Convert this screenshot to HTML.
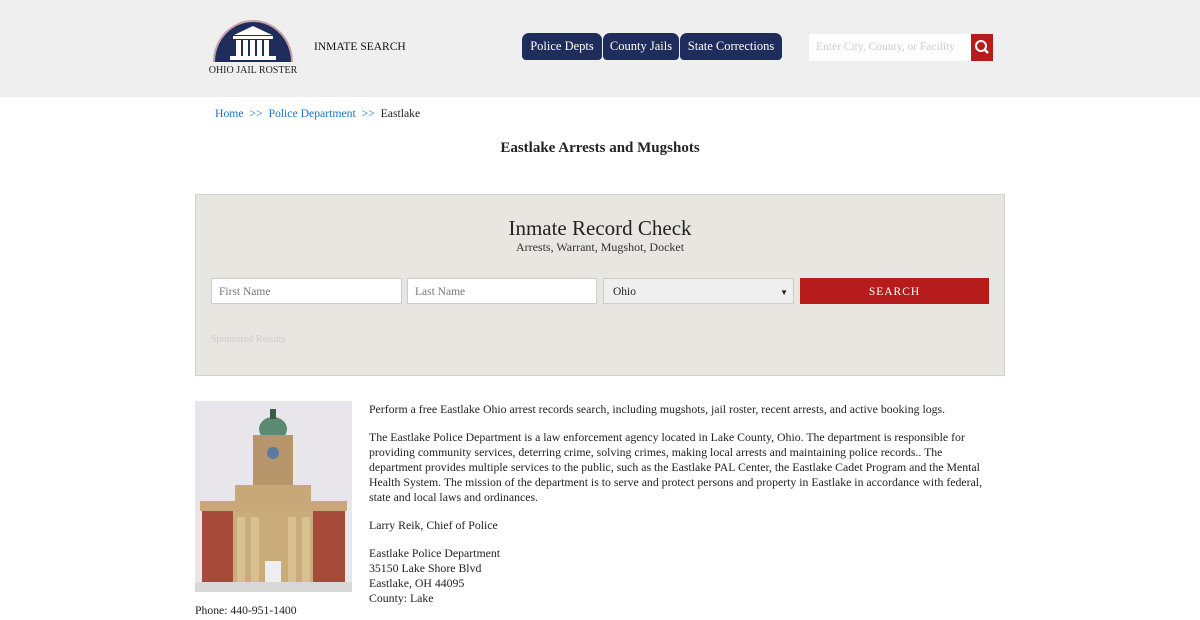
<!DOCTYPE html>
<html><head><meta charset="utf-8"><style>
*{box-sizing:border-box;margin:0;padding:0}
body{width:1200px;height:620px;overflow:hidden;background:#fff;font-family:"Liberation Serif",serif;color:#222;font-size:11.5px}
.hdr{height:97px;background:#efefef;position:relative}
.abs{position:absolute}
.tab{position:absolute;top:33px;height:27px;background:#1f2d5c;color:#fff;font-size:12.5px;line-height:27px;text-align:center;border-radius:7px 7px 4px 4px}
p{line-height:15px;margin-bottom:13px}
</style></head><body>
<div class="hdr">
 <svg class="abs" style="left:208px;top:18px" width="90" height="60" viewBox="0 0 90 60">
  <path d="M5 44 A40 42 0 0 1 85 44" fill="#c9a0a8"/>
  <path d="M7 44 A38 40 0 0 1 83 44 Z" fill="#1f2d5c"/>
  <polygon points="26,17 45,8 64,17" fill="#fff"/>
  <rect x="25" y="18" width="40" height="3" fill="#fff"/>
  <rect x="28" y="22" width="5" height="16" fill="#fff"/><rect x="35" y="22" width="5" height="16" fill="#fff"/><rect x="42" y="22" width="5" height="16" fill="#fff"/><rect x="49" y="22" width="5" height="16" fill="#fff"/><rect x="56" y="22" width="5" height="16" fill="#fff"/>
  <rect x="22" y="38" width="46" height="4" fill="#fff"/>
  <text x="45" y="55" font-size="10" text-anchor="middle" fill="#222" font-family="Liberation Serif">OHIO JAIL ROSTER</text>
 </svg>
 <div class="abs" style="left:314px;top:41px;font-size:11.5px;color:#111">INMATE SEARCH</div>
 <div class="tab" style="left:522px;width:80px">Police Depts</div>
 <div class="tab" style="left:603px;width:76px">County Jails</div>
 <div class="tab" style="left:680px;width:102px">State Corrections</div>
 <div class="abs" style="left:809px;top:34px;width:162px;height:27px;background:#fff;color:#ccc;font-size:11.5px;line-height:27px;padding-left:7px">Enter City, County, or Facility</div>
 <div class="abs" style="left:971px;top:34px;width:22px;height:27px;background:#b71c1c">
  <svg width="22" height="27"><circle cx="10" cy="12" r="5" fill="none" stroke="#fff" stroke-width="2"/><line x1="13.5" y1="15.5" x2="17" y2="19" stroke="#fff" stroke-width="2.5"/></svg></div>
</div>
<div class="abs" style="left:215px;top:107px;font-size:11.7px"><span style="color:#1a73c8">Home</span> <span style="color:#1a73c8">&nbsp;&gt;&gt;&nbsp;</span> <span style="color:#1a73c8">Police Department</span> <span style="color:#1a73c8">&nbsp;&gt;&gt;&nbsp;</span> Eastlake</div>
<div class="abs" style="left:0;width:1200px;top:140px;text-align:center;font-size:15px;font-weight:bold;color:#222">Eastlake Arrests and Mugshots</div>
<div class="abs" style="left:195px;top:194px;width:810px;height:182px;background:#e8e6e1;border:1px solid #d4d2cc">
 <div style="text-align:center;margin-top:21px;font-size:21px;color:#222">Inmate Record Check</div>
 <div style="text-align:center;font-size:12px;color:#333;margin-top:-1px">Arrests, Warrant, Mugshot, Docket</div>
 <div class="abs" style="left:15px;top:83px;width:191px;height:26px;background:#fff;border:1px solid #ccc;color:#777;font-size:11.5px;line-height:26px;padding-left:7px">First Name</div>
 <div class="abs" style="left:211px;top:83px;width:190px;height:26px;background:#fff;border:1px solid #ccc;color:#777;font-size:11.5px;line-height:26px;padding-left:7px">Last Name</div>
 <div class="abs" style="left:407px;top:83px;width:191px;height:26px;background:#efefef;border:1px solid #ccc;color:#222;font-size:11.5px;line-height:27px;padding-left:9px">Ohio<span style="position:absolute;right:5px;font-size:8px">&#9660;</span></div>
 <div class="abs" style="left:604px;top:83px;width:189px;height:26px;background:#b71c1c;color:#fff;font-size:11.5px;line-height:28px;text-align:center;letter-spacing:1px">SEARCH</div>
 <div class="abs" style="left:15px;top:139px;color:#ccc;font-size:10px">Sponsored Results</div>
</div>
<svg class="abs" style="left:195px;top:401px" width="157" height="191" viewBox="0 0 157 191">
 <rect width="157" height="191" fill="#e8e6ea"/>
 <ellipse cx="78" cy="28" rx="14" ry="12" fill="#5a8a72"/>
 <rect x="75" y="8" width="6" height="10" fill="#3c5a48"/>
 <rect x="58" y="34" width="40" height="52" fill="#b8966c"/>
 <circle cx="78" cy="52" r="6" fill="#5a7aa0"/>
 <rect x="40" y="84" width="76" height="16" fill="#c8a878"/>
 <rect x="5" y="100" width="147" height="10" fill="#c8a878"/>
 <rect x="7" y="110" width="143" height="81" fill="#a64a3a"/>
 <rect x="38" y="110" width="80" height="81" fill="#c9ac7a"/>
 <rect x="42" y="116" width="8" height="65" fill="#d8c090"/><rect x="56" y="116" width="8" height="65" fill="#d8c090"/><rect x="93" y="116" width="8" height="65" fill="#d8c090"/><rect x="107" y="116" width="8" height="65" fill="#d8c090"/>
 <rect x="70" y="160" width="16" height="25" fill="#eee"/>
 <rect x="0" y="181" width="157" height="10" fill="#d8d8d8"/>
</svg>
<div class="abs" style="left:195px;top:604px;font-size:11.7px">Phone: 440-951-1400</div>
<div class="abs" style="left:369px;top:402px;width:622px;font-size:11.8px;color:#222">
 <p>Perform a free Eastlake Ohio arrest records search, including mugshots, jail roster, recent arrests, and active booking logs.</p>
 <p>The Eastlake Police Department is a law enforcement agency located in Lake County, Ohio. The department is responsible for providing community services, deterring crime, solving crimes, making local arrests and maintaining police records.. The department provides multiple services to the public, such as the Eastlake PAL Center, the Eastlake Cadet Program and the Mental Health System. The mission of the department is to serve and protect persons and property in Eastlake in accordance with federal, state and local laws and ordinances.</p>
 <p>Larry Reik, Chief of Police</p>
 <p>Eastlake Police Department<br>35150 Lake Shore Blvd<br>Eastlake, OH 44095<br>County: Lake</p>
</div>
</body></html>
